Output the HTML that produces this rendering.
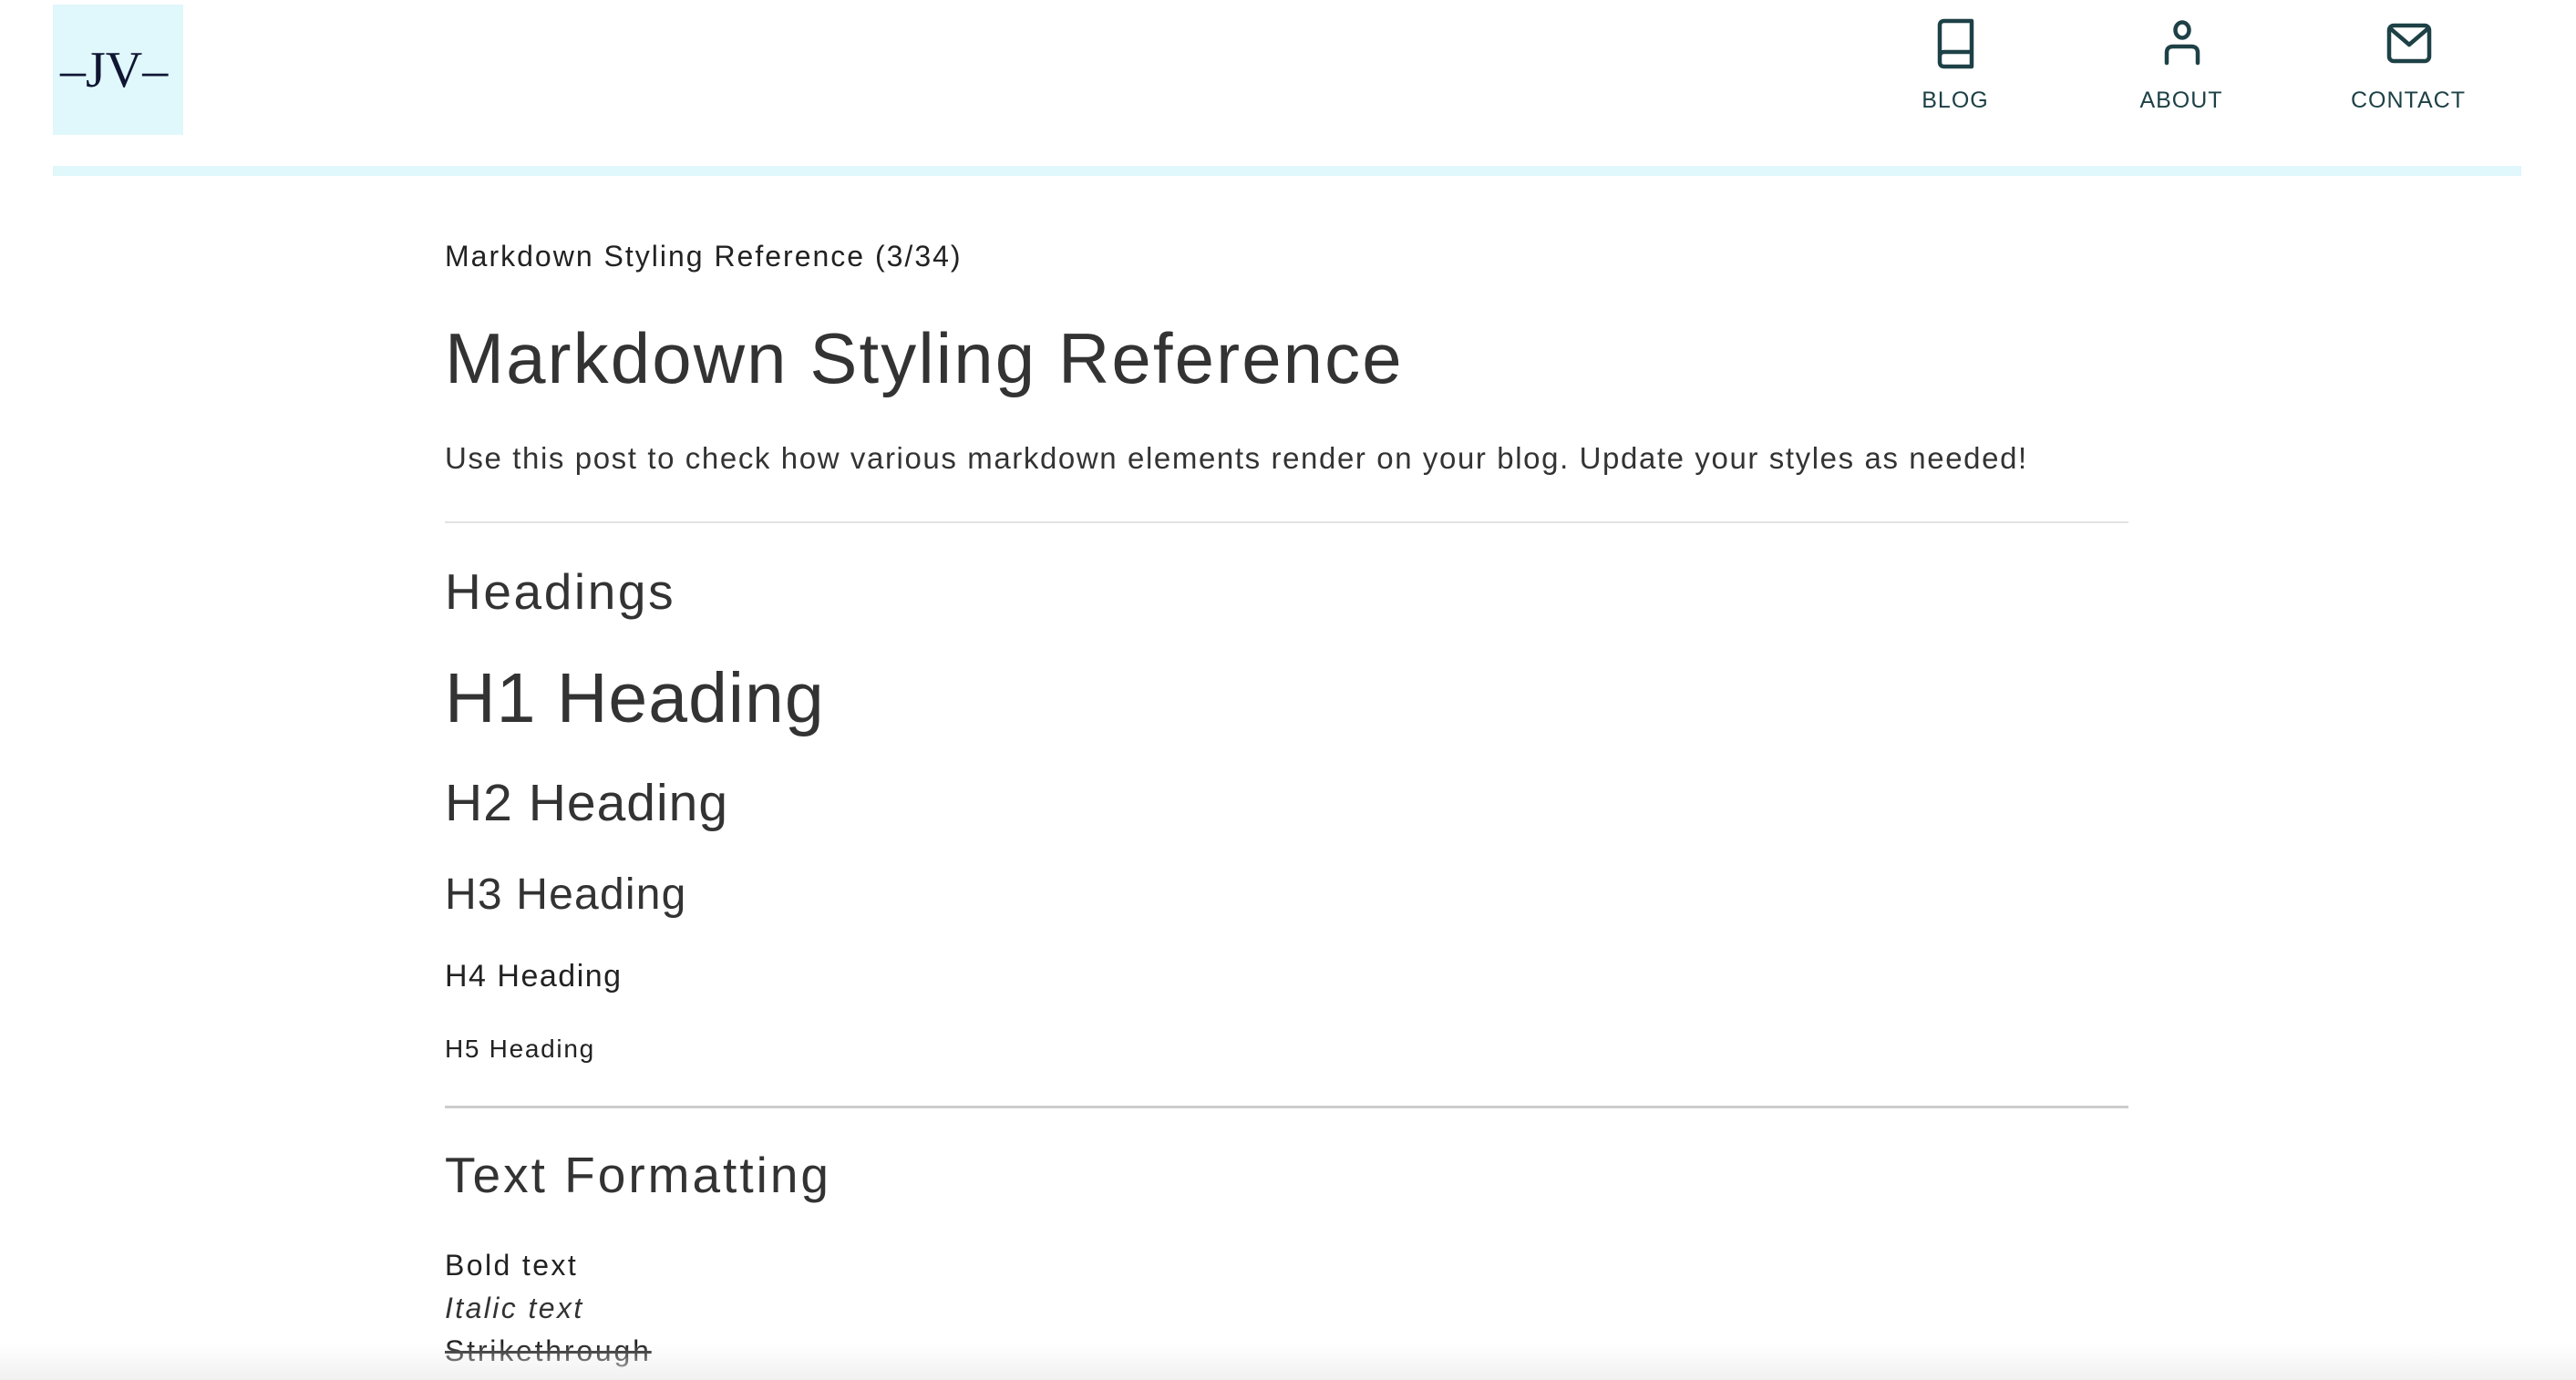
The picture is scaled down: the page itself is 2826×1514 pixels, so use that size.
<!DOCTYPE html>
<html><head><meta charset="utf-8"><style>
html,body{margin:0;padding:0;background:#fff;width:2826px;height:1514px;overflow:hidden;position:relative;font-family:"Liberation Sans",sans-serif;color:#333;}
.a{position:absolute;white-space:nowrap;}
.nav{position:absolute;color:#1d4146;font-size:25px;letter-spacing:1px;text-align:center;width:200px;}
</style></head><body>
<div class="a" style="left:58px;top:5px;width:143px;height:143px;background:#e0f7fb;"></div>
<div class="a" style="left:66px;top:42px;font-family:'Liberation Serif',serif;font-size:56px;color:#0f1633;line-height:70px;">–JV–</div>
<div class="a" style="left:58px;top:182px;width:2708px;height:11px;background:#e0f7fb;"></div>

<svg class="a" style="left:2125px;top:20px" width="42" height="56" viewBox="0 0 42 56" fill="none" stroke="#1d4146" stroke-width="4.5" stroke-linejoin="round"><path d="M38 3H8Q3 3 3 8V48Q3 53 8 53H38V3Z M3 42Q3 37 8 37H38"/></svg>
<svg class="a" style="left:2373px;top:22px" width="42" height="50" viewBox="0 0 42 50" fill="none" stroke="#1d4146" stroke-width="4.5" stroke-linecap="round"><ellipse cx="21" cy="11" rx="7.5" ry="8.5"/><path d="M4 47V36Q4 29 11 29H31Q38 29 38 36V47"/></svg>
<svg class="a" style="left:2618px;top:25px" width="50" height="45" viewBox="0 0 50 45" fill="none" stroke="#1d4146" stroke-width="4.5" stroke-linejoin="round"><rect x="3" y="3" width="44" height="39" rx="5"/><path d="M4 6L25 24L46 6"/></svg>
<div class="nav" style="left:2045px;top:96px;">BLOG</div>
<div class="nav" style="left:2293px;top:96px;">ABOUT</div>
<div class="nav" style="left:2542px;top:96px;">CONTACT</div>

<div class="a" style="left:488px;top:262px;font-size:32px;line-height:38px;letter-spacing:2px;color:#222;">Markdown Styling Reference (3/34)</div>
<div class="a" style="left:488px;top:348px;font-size:78px;line-height:90px;letter-spacing:2.1px;">Markdown Styling Reference</div>
<div class="a" style="left:488px;top:484px;font-size:33px;line-height:38px;letter-spacing:1.6px;">Use this post to check how various markdown elements render on your blog. Update your styles as needed!</div>
<div class="a" style="left:488px;top:572px;width:1847px;height:2px;background:#e2e2e2;"></div>
<div class="a" style="left:488px;top:618px;font-size:55px;line-height:62px;letter-spacing:2.6px;">Headings</div>
<div class="a" style="left:488px;top:721px;font-size:77px;line-height:90px;letter-spacing:1px;">H1 Heading</div>
<div class="a" style="left:488px;top:849px;font-size:57px;line-height:64px;letter-spacing:1px;">H2 Heading</div>
<div class="a" style="left:488px;top:954px;font-size:48px;line-height:56px;letter-spacing:1.2px;">H3 Heading</div>
<div class="a" style="left:488px;top:1051px;font-size:34px;line-height:40px;letter-spacing:1.5px;color:#222;">H4 Heading</div>
<div class="a" style="left:488px;top:1134px;font-size:28px;line-height:34px;letter-spacing:1.7px;color:#222;">H5 Heading</div>
<div class="a" style="left:488px;top:1213px;width:1847px;height:3px;background:#cccccc;"></div>
<div class="a" style="left:488px;top:1258px;font-size:55px;line-height:62px;letter-spacing:3px;">Text Formatting</div>
<div class="a" style="left:488px;top:1369px;font-size:32px;line-height:38px;letter-spacing:2.4px;color:#222;">Bold text</div>
<div class="a" style="left:488px;top:1416px;font-size:32px;line-height:38px;letter-spacing:2.4px;font-style:italic;">Italic text</div>
<div class="a" style="left:488px;top:1463px;font-size:32px;line-height:38px;letter-spacing:2.8px;text-decoration:line-through;color:#222;">Strikethrough</div>
<div class="a" style="left:0;top:1474px;width:2826px;height:40px;background:linear-gradient(to bottom,rgba(238,238,238,0),rgba(238,238,238,0.85));"></div>
</body></html>
